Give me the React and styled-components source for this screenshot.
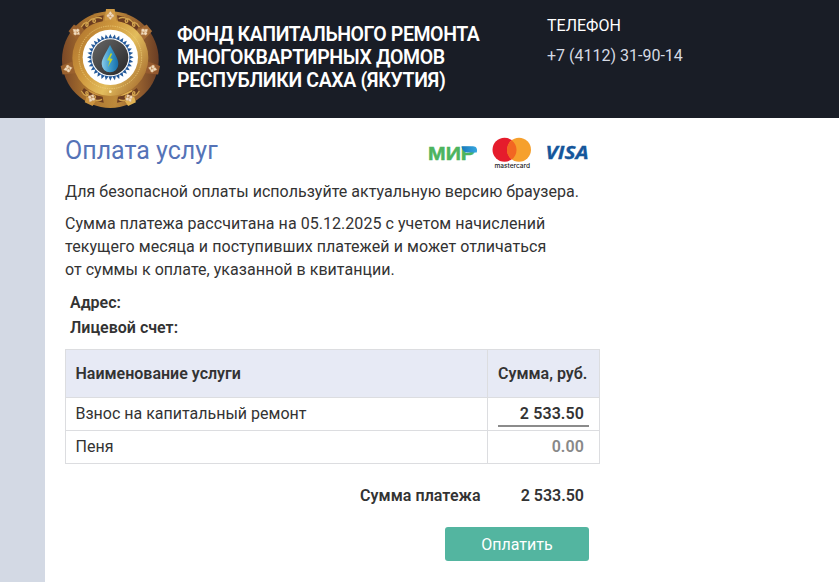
import React from "react";
import styled, { createGlobalStyle } from "styled-components";

const GlobalStyle = createGlobalStyle`
  * { box-sizing: border-box; }
  body { margin: 0; background: #fff; color: #333; font: 16px/23px Roboto, "Liberation Sans", sans-serif; }
  h1, h2, p { margin: 0; }
`;

const Page = styled.div`
  display: flex;
  flex-direction: column;
  height: 582px;
  overflow: hidden;
`;
const Header = styled.header`
  display: flex;
  flex: none;
  height: 118px;
  padding-left: 55px;
  background: #191d26;
  color: #fff;
`;
const Emblem = styled.svg`
  flex: none;
  width: 110px;
  height: 118px;
`;
const FundName = styled.h1`
  width: 370px;
  margin: 23px 0 0 12px;
  font-size: 19.5px;
  line-height: 23px;
  font-weight: 600;
  white-space: nowrap;
`;
const Line = styled.span`
  display: block;
  letter-spacing: ${(p) => p.$track || 0}px;
`;
const Contact = styled.div`
  padding-top: 11px;
  line-height: 30px;
`;
const Phone = styled.div`
  color: #d5dae4;
`;
const Body = styled.div`
  display: flex;
  flex: 1;
`;
const Side = styled.aside`
  width: 45px;
  background: #d3d9e4;
`;
const Main = styled.main`
  width: 555px;
  padding: 16px 0 0 20px;
`;
const TitleRow = styled.div`
  display: flex;
  justify-content: space-between;
  height: 46px;
  padding-right: 11px;
`;
const Title = styled.h2`
  font-size: 25px;
  line-height: 34px;
  font-weight: 400;
  color: #5573b7;
`;
const Cards = styled.svg`
  width: 164px;
  height: 40px;
`;
const Paragraph = styled.p`
  margin-bottom: 9px;
  white-space: nowrap;
`;
const Details = styled.div`
  padding-left: 5px;
  margin-bottom: 9px;
  line-height: 25px;
  font-weight: 600;
`;
const Table = styled.div`
  width: 535px;
  border: 1px solid #dcdde0;
  border-bottom: 0;
`;
const Row = styled.div`
  display: grid;
  grid-template-columns: 422px 1fr;
  height: ${(p) => (p.$head ? 48 : 33)}px;
  border-bottom: 1px solid #dcdde0;
  background: ${(p) => (p.$head ? "#e7eaf5" : "#fff")};
  font-weight: ${(p) => (p.$head ? 600 : 400)};
`;
const NameCell = styled.div`
  display: flex;
  align-items: center;
  padding: 0 0 ${(p) => (p.$raised ? 2 : 0)}px 9.5px;
  border-right: 1px solid #dcdde0;
`;
const SumCell = styled.div`
  display: flex;
  align-items: center;
  padding: 0 10px;
  white-space: nowrap;
`;
const Amount = styled.div`
  flex: 1;
  height: 27px;
  margin-top: -2px;
  padding: 2px 5px 0 0;
  border-bottom: 2px solid ${(p) => (p.$muted ? "transparent" : "#8b8b8b")};
  color: ${(p) => (p.$muted ? "#888" : "#333")};
  font-weight: 600;
  letter-spacing: 0.1px;
  text-align: right;
`;
const Total = styled.div`
  display: flex;
  justify-content: flex-end;
  gap: 40px;
  padding: 20px 16px 0 0;
  font-weight: 600;
`;
const PayButton = styled.button`
  display: block;
  width: 144px;
  height: 34px;
  margin: 20px 11px 0 auto;
  padding: 0;
  border: 0;
  border-radius: 3px;
  background: #53b5a0;
  color: #fff;
  font: 16px Roboto, sans-serif;
`;

const studs = [
  { angle: 0, fill: "#cf9a45" },
  { angle: 51.4, fill: "#a56c36" },
  { angle: 102.9, fill: "#94592f" },
  { angle: 154.3, fill: "#e0b252" },
  { angle: 205.7, fill: "#cb9440" },
  { angle: 257.1, fill: "#9a612e" },
  { angle: 308.6, fill: "#9a612e" },
];
const teeth = Array.from({ length: 32 }, (_, i) => (i * 360) / 32);

function FundEmblem() {
  return (
    <Emblem viewBox="0 0 330 354">
      <defs>
        <linearGradient id="rim">
          <stop offset="0" stopColor="#7b4827" />
          <stop offset=".25" stopColor="#a9722e" />
          <stop offset=".55" stopColor="#bd8a3b" />
          <stop offset=".8" stopColor="#95602f" />
          <stop offset="1" stopColor="#6a3d24" />
        </linearGradient>
        <linearGradient id="face" x1="0" x2="1" y1=".2" y2=".8">
          <stop offset="0" stopColor="#b0752e" />
          <stop offset=".35" stopColor="#d09a3f" />
          <stop offset=".62" stopColor="#e3bd5d" />
          <stop offset="1" stopColor="#a56b2e" />
        </linearGradient>
        <linearGradient id="drop" x1="0" x2="1">
          <stop offset="0" stopColor="#8bcbe9" />
          <stop offset=".5" stopColor="#3d9acb" />
          <stop offset="1" stopColor="#176da9" />
        </linearGradient>
        <linearGradient id="core" x1="0" x2="1" y1="0" y2="1">
          <stop offset="0" stopColor="#686766" />
          <stop offset="1" stopColor="#262729" />
        </linearGradient>
      </defs>
      <circle cx="166" cy="179" r="145" fill="url(#rim)" />
      {studs.map((s) => (
        <path key={s.angle} d="M153 27h26l5 38h-36z" fill={s.fill} transform={`rotate(${s.angle} 166 177)`} />
      ))}
      <circle cx="166" cy="174" r="114" fill="url(#face)" />
      {["", "translate(332 0) scale(-1 1)", "translate(0 354) scale(1 -1)", "translate(332 354) scale(-1 -1)"].map((t) => (
        <g key={t} transform={t} fill="none">
          <path d="M79 78Q108 51 146 46l-3 18Q109 69 87 90z" fill="#6b3c20" />
          <path d="M79 81c9-16 23-19 20-6-2 8-10 2-5-3 9-9 17-20 25-14 6 6-1 13-5 7-2-10 14-17 27-9" stroke="#d2a34e" strokeWidth="4" />
        </g>
      ))}
      <circle cx="166" cy="172" r="94" stroke="#f2d584" strokeWidth="2" strokeDasharray="4 3" fill="none" />
      {studs.map((s) => (
        <g key={s.angle} transform={`rotate(${s.angle} 166 177)`} fill="#f0dcc0" stroke="#c58f58" strokeWidth="1">
          <path d="M166 33l6 8-6 8-6-8z" />
          <circle cx="160" cy="47" r="5" />
          <circle cx="172" cy="47" r="5" />
          <path d="M159 51h14l-7 9z" />
        </g>
      ))}
      <circle cx="166" cy="172" r="83" fill="#fff" />
      {teeth.map((a) => (
        <path key={a} d="M166 102l6 13h-12z" fill="#23599a" transform={`rotate(${a} 166 172)`} />
      ))}
      <circle cx="166" cy="172" r="54" fill="url(#core)" />
      <path d="M165 135C155 156 140 174 140 192a25 25 0 0 0 50 0c0-18-15-36-25-57z" fill="url(#drop)" />
      <path d="M167 160l-11 21 8 1-5 19 14-24-8-2 7-14z" fill="#bed52f" />
      <circle cx="166" cy="275" r="4" fill="#fff0bd" />
    </Emblem>
  );
}

function PaymentLogos() {
  return (
    <Cards viewBox="0 0 164 40">
      <defs>
        <linearGradient id="mir">
          <stop offset="0" stopColor="#1778bd" />
          <stop offset="1" stopColor="#37a7df" />
        </linearGradient>
      </defs>
      <text x="3" y="26" textLength="47" lengthAdjust="spacingAndGlyphs" fontFamily="Liberation Sans, sans-serif" fontSize="19" fontWeight="700" fill="#4db45e" stroke="#4db45e" strokeWidth=".5">МИР</text>
      <path d="M36.500 12.300h11.500c3.500 0 4.700 3 3.700 6.200h-9.200c-3.500 0-5.500-2.500-6-6.200z" fill="url(#mir)" />
      <circle cx="79.500" cy="15.800" r="12" fill="#e51c2c" />
      <circle cx="94" cy="15.800" r="12" fill="#f6a02d" />
      <path d="M86.750 6.200a12 12 0 0 1 0 19.200 12 12 0 0 1 0-19.200z" fill="#f26622" />
      <text x="69.500" y="33.500" textLength="35.500" lengthAdjust="spacingAndGlyphs" fontFamily="Inter, sans-serif" fontSize="6.500" fontWeight="500" fill="#222">mastercard</text>
      <text x="120.500" y="25.300" textLength="43" lengthAdjust="spacingAndGlyphs" fontFamily="Open Sans, sans-serif" fontSize="18" fontWeight="700" fontStyle="italic" fill="#15569b" stroke="#15569b" strokeWidth=".3">VISA</text>
    </Cards>
  );
}

export default function App() {
  return (
    <Page>
      <GlobalStyle />
      <Header>
        <FundEmblem />
        <FundName>
          <Line $track={-0.42}>ФОНД КАПИТАЛЬНОГО РЕМОНТА</Line>
          <Line $track={-0.36}>МНОГОКВАРТИРНЫХ ДОМОВ</Line>
          <Line $track={-0.36}>РЕСПУБЛИКИ САХА (ЯКУТИЯ)</Line>
        </FundName>
        <Contact>
          <div>ТЕЛЕФОН</div>
          <Phone>+7 (4112) 31-90-14</Phone>
        </Contact>
      </Header>
      <Body>
        <Side />
        <Main>
          <TitleRow>
            <Title>Оплата услуг</Title>
            <PaymentLogos />
          </TitleRow>
          <Paragraph>
            <Line $track={0.035}>Для безопасной оплаты используйте актуальную версию браузера.</Line>
          </Paragraph>
          <Paragraph>
            <Line $track={0.045}>Сумма платежа рассчитана на 05.12.2025 с учетом начислений</Line>
            <Line $track={0.06}>текущего месяца и поступивших платежей и может отличаться</Line>
            <Line $track={0.03}>от суммы к оплате, указанной в квитанции.</Line>
          </Paragraph>
          <Details>
            <Line>Адрес:</Line>
            <Line>Лицевой счет:</Line>
          </Details>
          <Table>
            <Row $head>
              <NameCell><Line>Наименование услуги</Line></NameCell>
              <SumCell><Line>Сумма, руб.</Line></SumCell>
            </Row>
            <Row>
              <NameCell $raised><Line>Взнос на капитальный ремонт</Line></NameCell>
              <SumCell><Amount>2 533.50</Amount></SumCell>
            </Row>
            <Row>
              <NameCell $raised><Line>Пеня</Line></NameCell>
              <SumCell><Amount $muted>0.00</Amount></SumCell>
            </Row>
          </Table>
          <Total>
            <Line $track={0.05}>Сумма платежа</Line>
            <Line>2 533.50</Line>
          </Total>
          <PayButton>Оплатить</PayButton>
        </Main>
      </Body>
    </Page>
  );
}
